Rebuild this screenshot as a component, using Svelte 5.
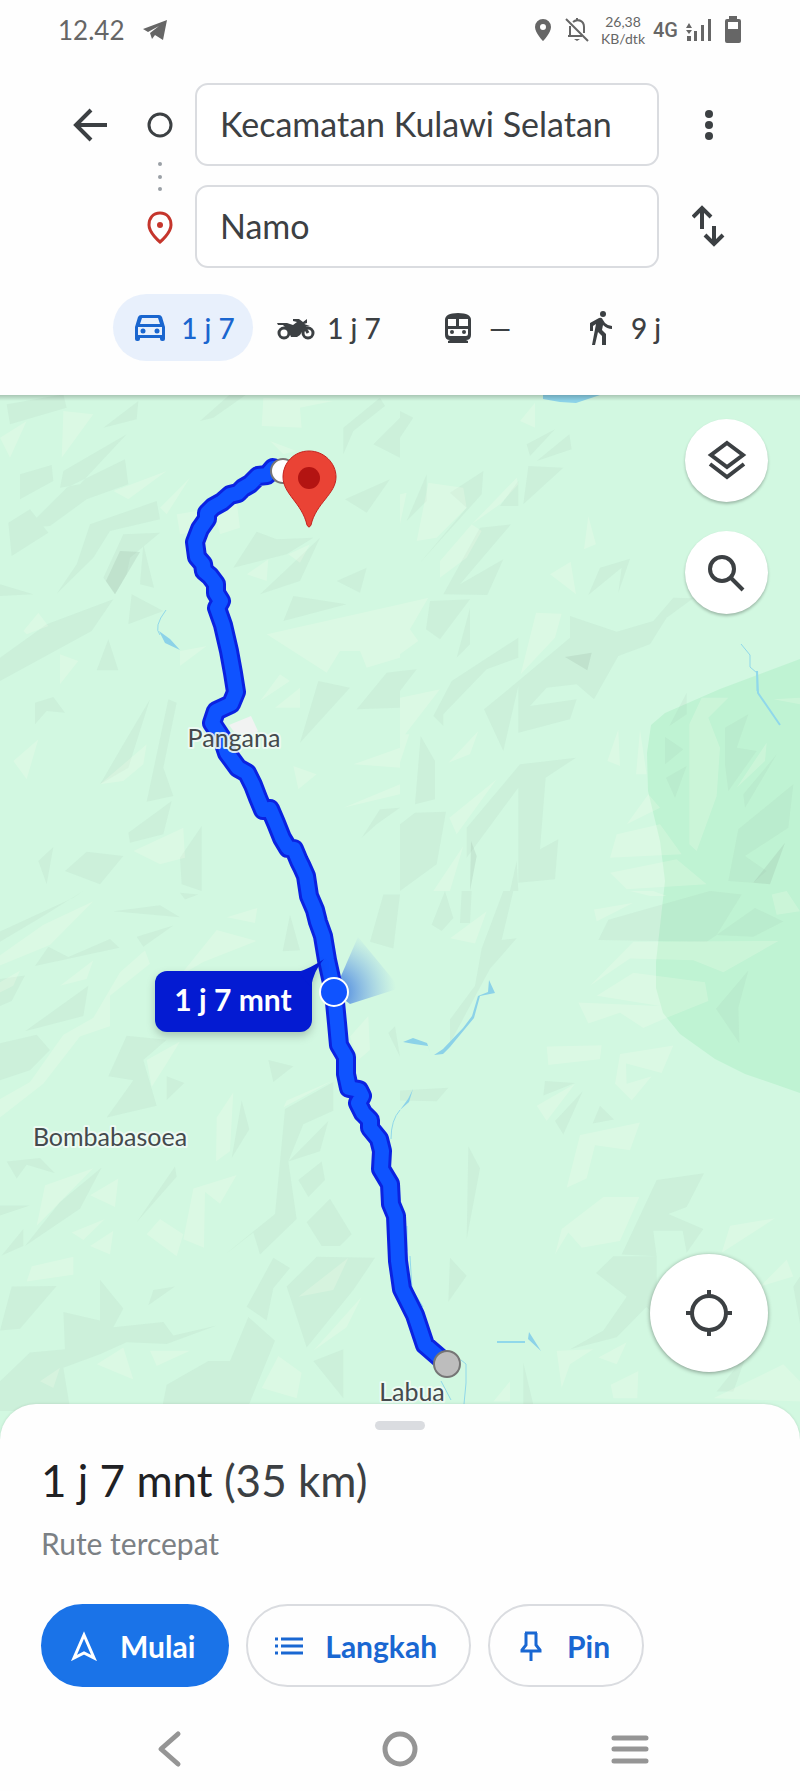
<script>
  let origin = "Kecamatan Kulawi Selatan";
  let destination = "Namo";
  let selectedMode = "car";

  const modes = [
    { id: "car", label: "Mobil", time: "1 j 7" },
    { id: "motor", label: "Motor", time: "1 j 7" },
    { id: "train", label: "Transportasi umum", time: "—" },
    { id: "walk", label: "Jalan kaki", time: "9 j" },
  ];

  // Relief shading, one entry per map tile
  const tiles = [
    {
      x: 0,
      y: 390,
      height: 500,
      box: "0 0 1200 1500",
      dark: "M20 40L190 10L200 50L30 100ZM310 110L415 30L410 85ZM380 130L190 240L180 290L240 280ZM60 250L155 222L160 270L60 325ZM200 290L375 205L385 280L260 325L150 405L80 410ZM25 395L90 355L145 425L35 495ZM270 400L470 330L480 385L330 420L280 500L170 608L230 520ZM370 430L480 425L390 500L380 550L345 610L310 560ZM430 460L462 590L420 580ZM0 580L100 610L0 615ZM395 610L490 660L385 700ZM140 700L340 625L275 720L0 870L0 800ZM325 745L355 838L290 838ZM105 935L160 918L195 965L140 960L105 1000ZM450 925L385 1130L300 1180L370 1060ZM505 925L530 935L490 1130L520 1215L440 1232ZM385 1325L515 1230L490 1330L390 1355ZM605 1305L605 1500L545 1480L540 1400ZM115 1410L160 1368L140 1480ZM195 1440L260 1382L370 1395L300 1480ZM700 530L770 422L830 445L940 440L860 490ZM780 610L960 440L900 570ZM880 615L1040 640L850 690ZM1010 570L1100 530L1080 605ZM1030 110L1140 20L1155 45L1060 120L1030 190ZM1120 160L1200 80L1200 200ZM1035 325L1170 265L1100 365ZM955 870L1050 890L900 1055ZM1070 955L1160 845L1200 840L1200 950ZM1085 1340L1140 1255L1200 1250L1130 1300ZM600 90L690 10L740 10L640 80Z",
      light: "M0 140L80 90L30 200ZM190 60L280 70L185 200ZM340 300L500 240L385 325ZM790 20L1000 30L900 50L905 110L785 105ZM640 350L710 330L720 410L660 430ZM530 370L590 360L620 420L540 430ZM865 490L930 460L900 515ZM740 550L805 505L800 570ZM70 720L115 665L145 705L80 730ZM180 790L235 810L180 880ZM540 780L620 765L540 825ZM800 730L1200 640L1200 800L1100 830L1080 780L1020 780L980 845ZM780 930L840 850L870 870ZM825 950L900 890L900 950ZM40 1110L115 1045L80 1165ZM300 1180L440 1060L430 1120L370 1170ZM880 1125L950 1150L895 1195ZM1060 1120L1200 1070L1200 1130ZM400 1380L550 1310L555 1400L480 1420ZM1030 1250L1200 1180L1200 1210ZM480 350L570 260L500 370ZM810 150L890 180L850 190Z",
      rock: "M360 480L420 483L345 610L318 570Z",
    },
    {
      x: 400,
      y: 390,
      height: 500,
      box: "0 0 1200 1500",
      dark: "M0 60L40 80L0 140ZM380 160L465 115L390 195ZM410 210L508 130L515 175ZM385 225L490 230L370 340ZM150 305L250 240L245 310L60 515L200 350ZM300 345L355 270L355 345ZM80 250L80 330L20 390ZM130 610L240 410L333 400L180 580L310 505L262 612ZM90 630L210 625L120 745L78 715ZM210 650L210 760L170 800ZM600 530L690 503L655 605L665 530L565 612ZM510 675L650 722L760 690L820 620L880 622L800 680L750 760L655 795L582 925L530 880L440 890L390 945L530 925L510 985L355 1025L355 885L310 1080L252 955L355 870L510 740ZM155 870L355 740L355 800L260 835L130 970L130 1005L100 975ZM0 840L50 835L0 900ZM62 1035L105 1110L105 1225L45 1240ZM0 1300L45 1265L138 1262L110 1420L0 1500ZM200 1310L360 1120L528 1100L437 1160L420 1375L475 1345L465 1465L355 1475L355 1190L200 1400ZM330 1500L350 1410L355 1500ZM860 905L860 970L808 1005ZM975 1010L1045 970L1010 1070L1070 1080L985 1200L975 1120ZM795 1038L850 1075L795 1120ZM798 1160L860 1125L825 1220ZM1030 1210L1130 1090L1035 1250ZM1015 1315L1180 1180L1165 1310L1035 1395L1100 1440L1060 1475L985 1470Z",
      light: "M360 90L405 35L405 110ZM85 275L190 290L200 350L110 440L50 450ZM215 400L350 260L355 280L300 340ZM120 510L215 400L245 420L200 500L120 560ZM0 310L20 305L0 400ZM565 375L588 460L552 475ZM450 550L512 512L528 610ZM0 640L85 620L30 715L55 750L0 790ZM408 665L485 668L465 740L362 850ZM0 920L120 895L0 1050ZM145 1115L235 1020L210 1090ZM655 1015L660 1125L622 1110ZM720 1015L740 1150L708 1150ZM0 1030L28 1030L0 1115ZM148 1280L290 1165L170 1330ZM868 1000L905 920L985 920L925 980L960 1070L950 1215L890 1380L868 1360ZM1010 1190L1100 1055L1095 1110ZM1120 925L1200 920L1200 940ZM680 1300L745 1210L780 1250ZM630 1400L650 1330L780 1300L845 1390ZM630 1445L830 1405L920 1480L680 1495ZM100 1500L190 1365L150 1500Z",
      rock: "M495 798L575 785L562 838ZM213 1350L230 1395L210 1500ZM1155 1355L1110 1480L1060 1475Z",
    },
    {
      x: 0,
      y: 890,
      height: 520,
      box: "0 30 1200 1538",
      dark: "M0 150L220 50L250 30L120 110L0 180ZM340 90L480 72L540 108ZM145 195L205 225L330 172L358 198L105 252ZM410 165L520 132L430 195ZM870 100L900 205L848 208ZM0 290L75 280L35 355L0 370ZM75 445L265 310L250 400ZM0 480L110 455L150 500L90 560L0 590ZM380 458L500 470L430 530L470 665L320 700L400 590L325 578ZM500 578L553 598L500 648ZM805 530L880 548L820 595ZM855 675L1000 595L1000 680L910 720L865 830L890 1000L780 1105L760 1040L675 1105L825 985ZM725 650L748 735L695 820ZM865 830L985 710L960 800ZM895 885L965 830L975 885L925 935ZM920 1010L990 940L1055 1045L1020 1080L965 1080ZM20 830L120 820L165 865L80 840L50 880ZM525 845L530 875L410 1010ZM305 848L240 970L75 1080L180 950ZM0 960L90 960L0 990ZM70 1030L70 1080L5 1108ZM35 1200L170 1198L60 1325L0 1330ZM300 1180L370 1265L340 1320L490 1305L520 1345L650 1315L500 1370L380 1365L300 1400L190 1440L215 1590L0 1590L0 1480L90 1395L195 1385L190 1275L300 1300ZM820 1115L870 1145L820 1205L800 1300L740 1260ZM860 1200L950 1112L1125 1115L1060 1210L920 1380ZM445 1255L460 1210L525 1200ZM500 1490L625 1420L690 1420L745 1290L825 1360L730 1590L480 1590ZM940 1420L1030 1385L1030 1530ZM1165 450L1185 430L1200 520ZM1110 180L1150 40L1200 40L1180 200ZM540 35L595 40L555 55Z",
      light: "M0 220L130 130L280 60L150 190L0 250ZM0 300L60 265L40 310L0 330ZM180 310L280 235L260 290ZM360 270L435 205L450 245L330 340L330 430L240 460L130 600L0 700L0 645L90 595L190 455L280 405ZM540 280L650 145L770 178L610 240ZM680 108L772 80L765 125ZM440 530L540 475L500 540L455 610ZM650 700L700 625L690 800L648 830ZM1050 460L1105 400L1110 500L1075 530ZM580 910L710 870L660 955L615 920L612 1085L550 1060ZM135 900L280 850L110 1020ZM270 930L355 880L345 965ZM440 1045L480 1000L550 1045L530 1110ZM215 1040L315 1000L250 1062ZM270 1080L340 1035L330 1105ZM95 1140L220 1112L220 1165L80 1185ZM290 1430L370 1380L400 1475ZM450 1390L570 1390L470 1435ZM120 1480L180 1440L160 1500ZM785 1500L835 1405L905 1455L890 1530ZM895 1230L1045 1115L1000 1210ZM940 1390L1085 1230L1040 1320ZM850 670L1000 590L860 650Z",
      rock: "",
    },
    {
      x: 400,
      y: 890,
      height: 520,
      box: "0 30 1200 1538",
      dark: "M95 130L135 30L160 110L125 148ZM180 125L185 30L215 30L210 125ZM245 200L310 30L340 30L305 175L350 170L270 260L150 480L150 410L225 310ZM595 175L625 115L930 30L1025 40L950 160L1065 80L1150 120L1060 165L950 160L920 180ZM1045 265L1015 375L1018 480L948 378ZM435 592L525 598L430 635ZM465 710L548 622L490 750ZM600 665L642 706L578 718ZM0 620L145 612L110 652L0 650ZM205 785L240 850L200 1060ZM770 885L912 865L860 965L805 985L910 1030L860 1100L848 1035L760 1035L770 1110L665 1105ZM588 1160L640 1110L770 1110L770 1290L655 1180L740 1260L650 1350L510 1385L610 1330L680 1230ZM150 1115L200 1168L145 1245ZM370 1425L410 1590L370 1590ZM950 1510L1040 1400L1000 1510ZM1180 1200L1200 1170L1200 1310Z",
      light: "M582 85L700 65L590 120ZM150 170L260 90L225 185ZM570 310L700 180L1135 178L970 270L880 235L690 230ZM590 340L700 272L915 300L925 355L800 405L730 435L660 390L565 422L535 360L780 370ZM440 490L605 486L600 528L445 545ZM660 512L820 487L785 568L678 540L680 600L755 578L695 650L645 600ZM410 665L525 600L440 710ZM500 908L540 752L720 715L690 797L585 782L560 880ZM465 1105L485 1030L610 935L718 935L660 1065L545 1085L505 1040ZM990 1020L1125 998L965 1100ZM470 1390L580 1385L510 1430L485 1500ZM595 1410L680 1365L650 1430ZM632 1490L715 1450L712 1530L640 1530ZM1080 1200L1160 1120L1180 1170ZM940 1530L1150 1430L1200 1480L1200 1540ZM690 30L760 30L800 45L750 45ZM1115 40L1160 30L1200 90L1130 100ZM280 1540L330 1480L330 1540Z",
      rock: "",
    },
  ];

  const route =
    "M283 470L273 467L267 474L258 475L250 483L243 487L238 492L230 494L222 501L213 506L207 512L207 518L200 528L195 541L197 556L203 563L204 570L210 575L216 583L216 592L221 600L217 607L223 624L229 650L233 672L236 691L231 703L216 710L212 722L222 737L227 752L238 767L247 772L253 784L258 797L263 809L270 808L276 822L282 837L288 847L294 848L299 860L302 866L306 875L309 895L315 909L318 921L323 935L327 959L334 991L337 1022L339 1044L346 1056L346 1073L349 1087L359 1089L362 1095L358 1102L363 1112L370 1119L370 1127L379 1138L382 1150L381 1168L390 1183L391 1203L396 1215L398 1260L402 1288L415 1314L425 1344L447 1363";
</script>

<div class="phone">
  <div class="status">
    <span class="clock">12.42</span>
    <svg class="telegram" width="26" height="22" viewBox="0 0 26 22">
      <path d="M1 10L25 1L21 21L13 16L10 20L8 14L17 7L6 13Z" />
    </svg>
    <div class="indicators">
      <svg width="18" height="22" viewBox="0 0 18 22">
        <path fill-rule="evenodd" d="M9 0a8 8 0 0 1 8 8c0 6-8 14-8 14S1 14 1 8a8 8 0 0 1 8-8zm0 5a3 3 0 1 0 0 6 3 3 0 0 0 0-6z" />
      </svg>
      <svg class="bell" width="24" height="26" viewBox="0 0 24 26">
        <path class="line" d="M1 2L23 24M5 9V19H17M3 19H16M8 5C13 1 19 4 19 10V16M12 1V4" />
        <path d="M9 22H15L12 24Z" />
      </svg>
      <div class="speed">
        <span>26,38</span>
        <span>KB/dtk</span>
      </div>
      <span class="network">4G</span>
      <svg width="26" height="22" viewBox="0 0 26 22">
        <path d="M1 17h4v5H1zM8 12h3v10H8zM15 6h3v16h-3zM22 0h3v22h-3zM0 9L3 4L6 9ZM0 11L3 15L6 11Z" />
      </svg>
      <svg class="battery" width="18" height="28" viewBox="0 0 18 28">
        <path fill-rule="evenodd" d="M5 0h8v3h2q2 0 2 2v20q0 2-2 2H3q-2 0-2-2V5q0-2 2-2h2zM4 6v7h10V6z" />
      </svg>
    </div>
  </div>

  <form class="directions" on:submit|preventDefault>
    <button type="button" class="icon-button" aria-label="Kembali">
      <svg class="stroke" width="36" height="36" viewBox="0 0 36 36">
        <path d="M34 18H3M18 3L3 18L18 33" />
      </svg>
    </button>
    <svg class="stops" viewBox="0 0 69 185" width="69" height="185">
      <circle class="from" cx="34" cy="42" r="11" />
      <circle class="dot" cx="34" cy="81" r="2" />
      <circle class="dot" cx="34" cy="94" r="2" />
      <circle class="dot" cx="34" cy="106" r="2" />
      <path class="to" d="M34 130c-7 0-11 5-11 12 0 8 11 17 11 17s11-9 11-17c0-7-4-12-11-12z" />
      <circle class="to-dot" cx="34" cy="142" r="3" />
    </svg>
    <input class="origin" type="text" aria-label="Titik awal" bind:value={origin} />
    <button type="button" class="icon-button" aria-label="Opsi lainnya">
      <svg width="12" height="32" viewBox="0 0 12 32">
        <circle cx="6" cy="5" r="4" />
        <circle cx="6" cy="16" r="4" />
        <circle cx="6" cy="27" r="4" />
      </svg>
    </button>
    <input class="destination" type="text" aria-label="Tujuan" bind:value={destination} />
    <button type="button" class="icon-button swap" aria-label="Tukar titik awal dan tujuan">
      <svg class="stroke" width="34" height="44" viewBox="0 0 34 44">
        <path d="M10 24V3M1 12L10 3L19 12M22 21V39M13 30L22 39L31 30" />
      </svg>
    </button>
  </form>

  <div class="modes">
    {#each modes as mode}
      <button
        class="mode"
        class:active={selectedMode === mode.id}
        aria-label={`${mode.label} ${mode.time}`}
        on:click={() => (selectedMode = mode.id)}
      >
        <svg width="38" height="36" viewBox="0 0 38 36">
          {#if mode.id === "car"}
            <path fill-rule="evenodd" d="M10 5H28Q30 5 31 7L34 17V29Q34 31 32 31H31Q29 31 29 29V28H9V29Q9 31 7 31H6Q4 31 4 29V17L7 7Q8 5 10 5ZM11 8L9 14H29L27 8ZM7 17V25H31V17Z" />
            <circle cx="12" cy="21" r="2.5" />
            <circle cx="26" cy="21" r="2.5" />
          {:else if mode.id === "motor"}
            <circle class="wheel" cx="7" cy="23" r="5" />
            <circle class="wheel" cx="31" cy="23" r="5" />
            <path d="M0 13H10L16 15L20 12L16 11V9H22L26 12L30 9V13L27 14L33 16L28 17L23 25L20 27H14L11 20L6 15H1Z" />
            <path class="wheel" d="M25 13L31 23" />
          {:else if mode.id === "train"}
            <path fill-rule="evenodd" d="M6 10Q6 3 19 3T32 10V25Q32 30 27 30L29 31V33H9V31L11 30Q6 30 6 25ZM9 9V16H17V9ZM20 9V16H29V9ZM9 19V24Q9 26 11 26H27Q29 26 29 24V19Z" />
            <circle cx="13" cy="22" r="2" />
            <circle cx="25" cy="22" r="2" />
          {:else}
            <circle cx="22" cy="4" r="3" />
            <path d="M18 8Q21 7 22 10L24 13Q27 16 31 16V19Q26 19 22 15L21 20L25 24V35H21V26L17 22L14 35H11L15 14L12 16V21H9V13Z" />
          {/if}
        </svg>
        <span>{mode.time}</span>
      </button>
    {/each}
  </div>

  <main class="map">
    <svg class="canvas" viewBox="0 394 800 1044" role="img" aria-label="Peta rute">
      <defs>
        <radialGradient id="beam" gradientUnits="userSpaceOnUse" cx="334" cy="991" r="62">
          <stop offset="0.2" stop-color="#2f6fe0" stop-opacity="0.7" />
          <stop offset="1" stop-color="#6ea3ee" stop-opacity="0" />
        </radialGradient>
        <linearGradient id="edge" x1="0" y1="0" x2="0" y2="1">
          <stop offset="0" stop-color="#000" stop-opacity="0.2" />
          <stop offset="1" stop-color="#000" stop-opacity="0" />
        </linearGradient>
      </defs>
      <rect class="land" x="0" y="394" width="800" height="1044" />
      <path class="park" d="M800 658L720 688L665 712L651 724L647 752L648 790L660 840L665 880L656 961V987L663 1012L680 1033L715 1058L745 1073L800 1092Z" />

      {#each tiles as tile}
        <svg x={tile.x} y={tile.y} width="400" height={tile.height} viewBox={tile.box} preserveAspectRatio="none">
          <path class="shade" d={tile.dark} />
          <path class="glow" d={tile.light} />
          <path class="rock" d={tile.rock} />
        </svg>
      {/each}

      <!-- Rivers and lakes -->
      <path class="lake" d="M543 394H600L576 402L560 401L543 398Z" />
      <path class="lake" d="M403 1041L413 1037L427 1042L431 1053L428 1045L414 1043ZM434 1054L443 1048L463 1027L472 1015L478 995L488 991L489 979L495 992L480 995L474 1017L450 1046L443 1053ZM400 1109L408 1098L413 1088L409 1101ZM529 1331L541 1350L528 1338ZM159 630L170 638L180 649L165 642Z" />
      <path class="river thin" d="M741 643L750 654V666L757 672V690M166 609Q153 626 160 634M400 1109Q391 1119 391 1138M407 1225V1250M410 1255L412 1288L423 1306M461 1359L466 1363V1382L464 1403M441 1380L451 1399" />
      <path class="river" d="M757 670L758 692L780 724M497 1341H525" />

      <path class="village" d="M229 724L251 715L258 730L242 742Z" />

      <path class="beam" d="M334 991L358 936L400 987L350 1003Z" />
      <path class="route-border" d={route} />
      <path class="route" d={route} />

      <circle class="start" cx="283" cy="470" r="12" />
      <circle class="end" cx="447" cy="1363" r="13" />
      <circle class="me" cx="334" cy="991" r="14" />

      <path class="pin" d="M309 450C294 450 283 462 283 476C283 493 302 502 307 524Q309 528 311 524C316 502 336 493 336 476C336 462 324 450 309 450Z" />
      <circle class="pin-core" cx="309" cy="477" r="11" />

      <g class="bubble">
        <rect x="155" y="970" width="157" height="61" rx="12" />
        <path d="M298 971Q311 967 324 958Q314 969 311 986Z" />
      </g>
      <text class="bubble-text" x="233" y="1010">1 j 7 mnt</text>

      <text class="place" x="234" y="746">Pangana</text>
      <text class="place" x="110" y="1145">Bombabasoea</text>
      <text class="place" x="412" y="1400">Labua</text>

      <rect x="0" y="394" width="800" height="6" fill="url(#edge)" />
    </svg>

    <div class="controls">
      <button class="round" aria-label="Lapisan peta">
        <svg class="stroke" width="40" height="42" viewBox="0 0 40 42">
          <path d="M20 3L36 15L20 27L4 15ZM3 24L20 37L37 24" />
        </svg>
      </button>
      <button class="round" aria-label="Telusuri di peta">
        <svg class="stroke" width="40" height="42" viewBox="0 0 40 42">
          <circle cx="15" cy="17" r="12" />
          <path d="M23 25L36 38" />
        </svg>
      </button>
      <button class="round locate" aria-label="Lokasi saya">
        <svg class="stroke" width="46" height="46" viewBox="0 0 46 46">
          <circle cx="23" cy="23" r="17" />
          <path d="M23 0V7M23 39V46M0 23H7M39 23H46" />
        </svg>
      </button>
    </div>
  </main>

  <section class="sheet">
    <div class="handle"></div>
    <h1>1 j 7 mnt <span>(35 km)</span></h1>
    <p>Rute tercepat</p>
    <div class="actions">
      <button class="action primary">
        <svg width="30" height="30" viewBox="0 0 30 30">
          <path d="M15 4L25 27L15 22L5 27Z" />
        </svg>
        Mulai
      </button>
      <button class="action">
        <svg width="30" height="30" viewBox="0 0 30 30">
          <path d="M7 8H29M7 15H29M7 22H29M1 8H4M1 15H4M1 22H4" />
        </svg>
        Langkah
      </button>
      <button class="action">
        <svg width="30" height="30" viewBox="0 0 30 30">
          <path d="M9 2H21M10 2V14L6 19V20H24V19L20 14V2M15 20V30" />
        </svg>
        Pin
      </button>
    </div>
  </section>

  <nav class="system">
    <button aria-label="Kembali ke layar sebelumnya">
      <svg width="40" height="40" viewBox="0 0 40 40"><path d="M28 5L11 20L28 35" /></svg>
    </button>
    <button aria-label="Layar utama">
      <svg width="40" height="40" viewBox="0 0 40 40"><circle cx="20" cy="20" r="15" /></svg>
    </button>
    <button aria-label="Aplikasi terbaru">
      <svg width="40" height="40" viewBox="0 0 40 40"><path d="M4 9H36M4 20H36M4 32H36" /></svg>
    </button>
  </nav>
</div>

<style>
  :global(body) {
    background: #fefefe;
  }

  .phone {
    font-family: Lato, "Open Sans", sans-serif;
    color: #3c4043;
  }

  button {
    font: inherit;
    color: inherit;
    background: none;
    border: none;
    padding: 0;
    display: flex;
    align-items: center;
    justify-content: center;
  }

  svg {
    display: block;
    fill: currentColor;
    flex: none;
  }

  .stroke {
    fill: none;
    stroke: currentColor;
    stroke-width: 4;
  }

  /* Status bar */
  .status {
    display: flex;
    align-items: center;
    height: 60px;
    padding: 0 58px;
    color: #666;
  }

  .clock {
    font-size: 26px;
  }

  .telegram {
    margin-left: 18px;
  }

  .indicators {
    display: flex;
    align-items: center;
    gap: 8px;
    margin-left: auto;
  }

  .bell {
    margin-left: 5px;
  }

  .bell .line {
    fill: none;
    stroke: currentColor;
    stroke-width: 2;
  }

  .speed {
    display: flex;
    flex-direction: column;
    align-items: center;
    font-size: 14px;
    line-height: 17px;
    margin-left: 4px;
  }

  .network {
    font-family: Roboto, sans-serif;
    font-size: 20px;
    font-weight: 500;
  }

  .battery {
    margin-left: 4px;
  }

  /* Origin and destination */
  .directions {
    display: grid;
    grid-template-columns: 70px 69px 1fr 100px;
    grid-template-rows: 83px 83px;
    row-gap: 19px;
    padding: 23px 41px 0 56px;
  }

  .stops {
    grid-row: 1 / 3;
    grid-column: 2;
  }

  .from,
  .to {
    fill: none;
    stroke: #3c4043;
    stroke-width: 3;
  }

  .to {
    stroke: #c5352c;
  }

  .to-dot {
    fill: #c5352c;
  }

  .dot {
    fill: #9aa0a6;
  }

  input {
    box-sizing: border-box;
    width: 100%;
    min-width: 0;
    padding: 0 23px 2px;
    border: 2px solid #dadce0;
    border-radius: 13px;
    background: #fff;
    color: #3c4043;
    font: inherit;
    font-size: 34px;
    outline: none;
  }

  .destination {
    grid-column: 3;
  }

  .swap {
    grid-column: 4;
  }

  /* Travel modes */
  .modes {
    display: flex;
    gap: 6px;
    padding: 26px 97px 34px 113px;
  }

  .mode {
    flex: 0 1 140px;
    gap: 12px;
    height: 67px;
    border-radius: 34px;
    font-size: 28px;
    font-weight: 500;
  }

  .mode.active {
    background: #e8f0fc;
    color: #1a66cf;
  }

  .wheel {
    fill: none;
    stroke: currentColor;
    stroke-width: 3;
  }

  /* Map */
  .map {
    position: relative;
  }

  .canvas {
    width: 100%;
    height: auto;
  }

  .land {
    fill: #d2f8e1;
  }

  .park {
    fill: #bff3d3;
  }

  .shade {
    fill: #8fa89d;
    fill-opacity: 0.09;
  }

  .glow {
    fill: #fffdf2;
    fill-opacity: 0.2;
  }

  .rock {
    fill: #8fa89d;
    fill-opacity: 0.2;
  }

  .lake {
    fill: #8cd2e8;
  }

  .river {
    fill: none;
    stroke: #90d8ea;
    stroke-width: 2;
  }

  .river.thin {
    stroke-width: 1;
  }

  .village {
    fill: #f1f3f2;
  }

  .beam {
    fill: url(#beam);
  }

  .route-border,
  .route {
    fill: none;
    stroke-linejoin: round;
  }

  .route-border {
    stroke: #0b22e0;
    stroke-width: 20;
  }

  .route {
    stroke: #0f53ff;
    stroke-width: 14;
  }

  .start {
    fill: #fff;
    stroke: #777;
    stroke-width: 2;
  }

  .end {
    fill: #bdbdbd;
    stroke: #757575;
    stroke-width: 2;
  }

  .me {
    fill: #0f53ff;
    stroke: #fff;
    stroke-width: 2;
  }

  .pin {
    fill: #ea4335;
    stroke: #c5221f;
    stroke-width: 1;
  }

  .pin-core {
    fill: #b31412;
  }

  .bubble {
    fill: #041bd2;
    filter: drop-shadow(0 4px 4px rgba(0, 0, 0, 0.2));
  }

  .bubble-text {
    fill: #fff;
    font-size: 30px;
    font-weight: 700;
    text-anchor: middle;
  }

  .place {
    fill: #444a4d;
    stroke: #f0fbf5;
    stroke-opacity: 0.9;
    stroke-width: 4;
    stroke-linejoin: round;
    paint-order: stroke;
    font-size: 25px;
    text-anchor: middle;
  }

  .controls {
    position: absolute;
    top: 24px;
    right: 32px;
    bottom: 67px;
    display: flex;
    flex-direction: column;
    align-items: flex-end;
    gap: 29px;
  }

  .round {
    width: 83px;
    height: 83px;
    border-radius: 50%;
    background: #fff;
    box-shadow: 0 2px 3px rgba(0, 0, 0, 0.25);
  }

  .locate {
    width: 118px;
    height: 118px;
    margin-top: auto;
    box-shadow: 0 1px 4px rgba(0, 0, 0, 0.4);
  }

  /* Route summary */
  .sheet {
    position: relative;
    margin-top: -35px;
    padding: 17px 41px 0;
    border-radius: 36px 36px 0 0;
    background: #fefefe;
    box-shadow: 0 0 3px rgba(0, 0, 0, 0.12);
    clip-path: inset(-8px 0 0 0);
  }

  .handle {
    width: 50px;
    height: 9px;
    margin: 0 auto;
    border-radius: 5px;
    background: #dadce0;
  }

  h1 {
    margin: 24px 0 0;
    color: #202124;
    font-size: 44px;
    font-weight: 400;
    line-height: 52px;
  }

  h1 span {
    color: #3c4043;
  }

  p {
    margin: 19px 0 0;
    color: #7b8084;
    font-size: 30px;
    line-height: 36px;
  }

  .actions {
    display: flex;
    gap: 17px;
    margin-top: 43px;
  }

  .action {
    height: 83px;
    gap: 21px;
    padding: 0 32px 0 26px;
    border: 2px solid #dadce0;
    border-radius: 42px;
    color: #1967d2;
    font-size: 30px;
    font-weight: 700;
  }

  .action svg {
    fill: none;
    stroke: currentColor;
    stroke-width: 3;
  }

  .action.primary {
    border-color: #1a73e8;
    background: #1a73e8;
    color: #fff;
  }

  /* Android navigation */
  .system {
    display: flex;
    justify-content: center;
    gap: 190px;
    height: 86px;
    margin-top: 19px;
    color: #959595;
  }

  .system svg {
    fill: none;
    stroke: currentColor;
    stroke-width: 5;
    stroke-linecap: round;
    stroke-linejoin: round;
  }
</style>
